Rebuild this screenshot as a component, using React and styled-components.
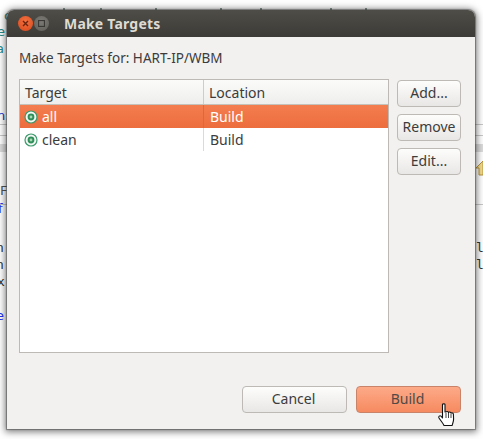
import React from "react";
import styled, { createGlobalStyle } from "styled-components";

const GlobalStyle = createGlobalStyle`
  html, body {
    margin: 0;
    padding: 0;
    background: #fff;
    overflow: hidden;
  }
`;

const Desktop = styled.div`
  position: relative;
  width: 483px;
  height: 439px;
  overflow: hidden;
  background: #fff;
  font-family: "Noto Sans", "Open Sans", sans-serif;
`;

const Fragment = styled.span`
  position: absolute;
  left: ${({ x }) => x}px;
  top: ${({ y }) => y}px;
  font-family: ${({ mono }) => (mono ? '"DejaVu Sans Mono", monospace' : '"DejaVu Sans", sans-serif')};
  font-size: 13px;
  line-height: 16px;
  color: ${({ color }) => color};
`;

const Rule = styled.div`
  position: absolute;
  left: ${({ x }) => x}px;
  top: ${({ y }) => y}px;
  width: ${({ w }) => w}px;
  height: ${({ h }) => h || 1}px;
  background: ${({ color }) => color || "#c9c9c9"};
`;

const ArrowTip = styled.svg`
  position: absolute;
  left: 475px;
  top: 160px;
`;

const Window = styled.div`
  position: absolute;
  left: 7px;
  top: 10px;
  width: 468px;
  height: 419px;
  display: flex;
  flex-direction: column;
  border-radius: 7px 7px 0 0;
  background: #f2f1f0;
  box-shadow: 0 0 1px 1px rgba(60, 60, 60, 0.5), 0 1px 7px 2px rgba(0, 0, 0, 0.5);
`;

const TitleBar = styled.div`
  height: 27px;
  flex: none;
  display: flex;
  align-items: center;
  padding-left: 11px;
  border-radius: 7px 7px 0 0;
  background: linear-gradient(#4f4d47, #3d3b37);
`;

const WindowButton = styled.div`
  width: 15px;
  height: 15px;
  margin-right: 1px;
  border-radius: 50%;
  display: flex;
  align-items: center;
  justify-content: center;
  background: ${({ close }) =>
    close ? "radial-gradient(circle at 50% 35%, #f2703f, #d8481c)" : "radial-gradient(circle at 50% 35%, #7b7a74, #5f5e59)"};
`;

const Title = styled.div`
  margin-left: 14px;
  font-size: 14px;
  font-weight: 700;
  color: #dfdbd2;
  letter-spacing: 0.2px;
`;

const Body = styled.div`
  flex: 1;
  display: flex;
  flex-direction: column;
  padding: 12px 14px 16px 12px;
`;

const Heading = styled.div`
  height: 30px;
  font-size: 13.5px;
  line-height: 18px;
  color: #3c3c3c;
`;

const Main = styled.div`
  height: 274px;
  display: flex;
  gap: 8px;
`;

const Table = styled.div`
  width: 370px;
  box-sizing: border-box;
  border: 1px solid #bdb9b4;
  background: #fff;
  display: flex;
  flex-direction: column;
`;

const Row = styled.div`
  display: grid;
  grid-template-columns: 184px 1fr;
  height: ${({ h }) => h}px;
  align-items: stretch;
  font-size: 14px;
  color: ${({ selected }) => (selected ? "#fff" : "#3c3c3c")};
  background: ${({ selected }) => (selected ? "linear-gradient(#f47d4f, #ec6d3d)" : "#fff")};
`;

const HeaderRow = styled(Row)`
  background: linear-gradient(#fbfbfa, #efeeec);
  border-bottom: 1px solid #c4c1bb;
  box-sizing: border-box;
`;

const Cell = styled.div`
  display: flex;
  align-items: center;
  gap: 4px;
  padding-left: ${({ pad }) => pad}px;
  border-right: ${({ divider }) => (divider ? `1px solid ${divider}` : "none")};
`;

const SideButtons = styled.div`
  display: flex;
  flex-direction: column;
  gap: 7px;
  padding-top: 1px;
`;

const Button = styled.button`
  width: ${({ w }) => w}px;
  height: 27px;
  padding: 0 ${({ w }) => (w < 100 ? 0 : 2)}px 2px 0;
  box-sizing: border-box;
  font-family: inherit;
  font-size: 14px;
  color: ${({ primary }) => (primary ? "#4f4a46" : "#3c3c3c")};
  border: 1px solid ${({ primary }) => (primary ? "#c98369" : "#bdb9b4")};
  border-radius: 4px;
  background: ${({ primary }) =>
    primary ? "linear-gradient(#fdaa88, #f68a60)" : "linear-gradient(#fdfdfc, #e9e7e5)"};
`;

const Footer = styled.div`
  margin-top: auto;
  display: flex;
  justify-content: flex-end;
  gap: 9px;
`;

const Cursor = styled.svg`
  position: absolute;
  left: 438px;
  top: 403px;
`;

const Radio = () => (
  <svg width="14" height="14" viewBox="0 0 14 14">
    <circle cx="7" cy="7" r="6" fill="#f4f8f4" stroke="#3c9a6c" strokeWidth="1.2" />
    <circle cx="7" cy="7" r="3.4" fill="#2f8f5b" />
    <circle cx="7" cy="7" r="1.4" fill="#a9d8b0" />
  </svg>
);

const targets = [
  { name: "all", location: "Build", selected: true },
  { name: "clean", location: "Build", selected: false },
];

const fragments = [
  { x: 4, y: 8, text: "c", color: "#2a8a8a" },
  { x: -3, y: 24, text: "e", color: "#2a8a8a" },
  { x: -4, y: 41, text: "a", color: "#2a8a8a" },
  { x: -3, y: 108, text: "n:", color: "#2233cc" },
  { x: 0, y: 183, text: "F", color: "#555" },
  { x: -2, y: 201, text: "f", color: "#3333ee" },
  { x: -4, y: 240, text: "n", color: "#333", mono: true },
  { x: -4, y: 257, text: "n", color: "#333", mono: true },
  { x: -3, y: 274, text: "x", color: "#333", mono: true },
  { x: -4, y: 308, text: "e", color: "#2233ee" },
  { x: 476, y: 240, text: "l", color: "#333", mono: true },
  { x: 476, y: 257, text: "l", color: "#333", mono: true },
];

// tops of the page text that stick out above the dialog
const letterTops = [63, 100, 155, 220, 260, 330, 365];

export default function App() {
  return (
    <Desktop>
      <GlobalStyle />
      {fragments.map((f, i) => (
        <Fragment key={i} x={f.x} y={f.y} color={f.color} mono={f.mono}>
          {f.text}
        </Fragment>
      ))}
      {letterTops.map((x) => (
        <Rule key={x} x={x} y={8} w={2} h={2} color="#8a9a94" />
      ))}
      <Rule x={0} y={124} w={7} />
      <Rule x={0} y={135} w={7} />
      <Rule x={0} y={144} w={7} h={8} color="#dcdcdc" />
      <Rule x={0} y={204} w={7} />
      <Rule x={475} y={124} w={8} />
      <Rule x={475} y={135} w={8} />
      <Rule x={475} y={144} w={8} h={8} color="#dcdcdc" />
      <Rule x={475} y={204} w={8} />
      <ArrowTip width="8" height="16" viewBox="0 0 8 16">
        <path d="M8 1 L1 8 L4 8 L4 15 L8 15 Z" fill="#f6dc8c" stroke="#b8923a" strokeWidth="1" />
      </ArrowTip>

      <Window>
        <TitleBar>
          <WindowButton close>
            <svg width="7" height="7" viewBox="0 0 7 7">
              <path d="M1 1 L6 6 M6 1 L1 6" stroke="#6b2410" strokeWidth="1.4" />
            </svg>
          </WindowButton>
          <WindowButton>
            <svg width="7" height="7" viewBox="0 0 7 7">
              <rect x="0.5" y="0.5" width="6" height="6" fill="none" stroke="#3a3936" strokeWidth="1.2" />
            </svg>
          </WindowButton>
          <Title>Make Targets</Title>
        </TitleBar>
        <Body>
          <Heading>Make Targets for: HART-IP/WBM</Heading>
          <Main>
            <Table>
              <HeaderRow h={25}>
                <Cell pad={5} divider="#d0cdc8">Target</Cell>
                <Cell pad={5}>Location</Cell>
              </HeaderRow>
              {targets.map((t) => (
                <Row key={t.name} h={23} selected={t.selected}>
                  <Cell pad={4} divider={t.selected ? "#d96a3f" : "#dcdad6"}>
                    <Radio />
                    {t.name}
                  </Cell>
                  <Cell pad={6}>{t.location}</Cell>
                </Row>
              ))}
            </Table>
            <SideButtons>
              <Button w={64}>Add...</Button>
              <Button w={64}>Remove</Button>
              <Button w={64}>Edit...</Button>
            </SideButtons>
          </Main>
          <Footer>
            <Button w={105}>Cancel</Button>
            <Button w={105} primary>Build</Button>
          </Footer>
        </Body>
      </Window>

      <Cursor width="20" height="26" viewBox="0 0 20 26">
        <path
          d="M4.5 1.5 C4.5 0.6 7 0.6 7 1.5 L7 9 L8 9 C8.5 8.2 10 8.2 10.5 9.5 C11 8.7 12.6 8.8 13 10.2 C13.6 9.6 15.2 9.8 15.4 11.2 L15.6 16 C15.6 19 14.6 20 14.2 22.5 L6 22.5 C5 20 2.5 17.5 1 15 C0.2 13.4 1.8 12.2 3 13.2 L4.5 15 Z"
          fill="#fff"
          stroke="#111"
          strokeWidth="1.1"
          strokeLinejoin="round"
        />
        <path d="M8 10 L8 15 M10.5 10 L10.5 15 M13 11 L13 15" stroke="#111" strokeWidth="0.8" />
      </Cursor>
    </Desktop>
  );
}
